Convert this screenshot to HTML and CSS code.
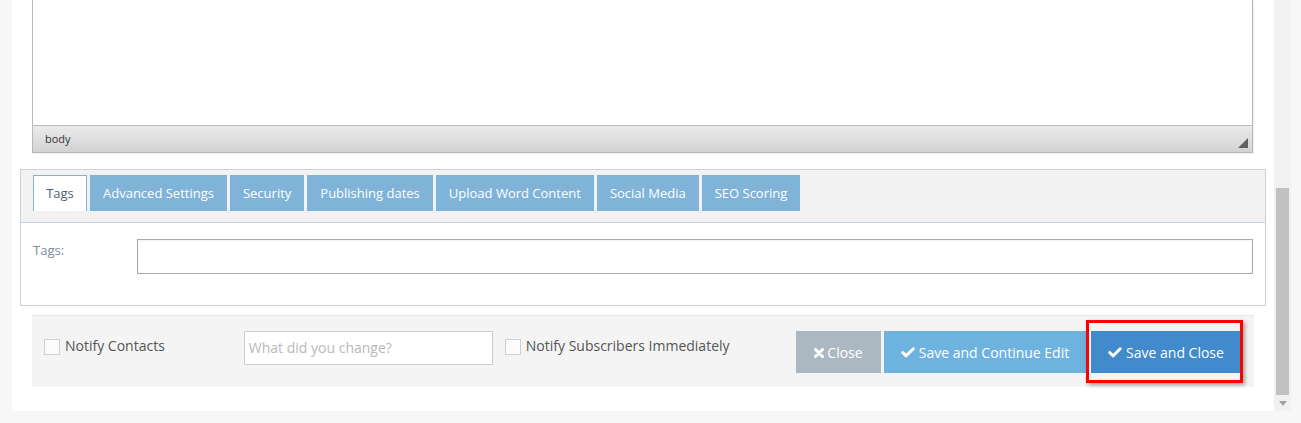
FILE: index.html
```html
<!DOCTYPE html>
<html>
<head>
<meta charset="utf-8">
<link rel="stylesheet" href="styles.css">
</head>
<body>
<div class="layout">
  <div class="main">
    <div class="editor">
      <div class="editor-area"></div>
      <div class="statusbar">
        <span class="path">body</span>
        <svg class="grip" width="10" height="10" viewBox="0 0 10 10"><polygon points="10,0 10,10 0,10" fill="#5f5f5f"/></svg>
      </div>
    </div>

    <div class="tabs-panel">
      <div class="tab-header">
        <div class="tab active">Tags</div>
        <div class="tab">Advanced Settings</div>
        <div class="tab">Security</div>
        <div class="tab">Publishing dates</div>
        <div class="tab">Upload Word Content</div>
        <div class="tab">Social Media</div>
        <div class="tab">SEO Scoring</div>
      </div>
      <div class="tab-body">
        <label class="field-label">Tags:</label>
        <div class="tags-input"></div>
      </div>
    </div>

    <div class="footer">
      <label class="check"><span class="box"></span>Notify Contacts</label>
      <div class="change-input">What did you change?</div>
      <label class="check check2"><span class="box"></span>Notify Subscribers Immediately</label>
      <div class="buttons">
        <div class="btn btn-close">
          <svg width="10" height="10" viewBox="0 0 10 10"><path d="M1.5 1.5 L8.5 8.5 M8.5 1.5 L1.5 8.5" stroke="#fff" stroke-width="3" stroke-linecap="round"/></svg>
          <span>Close</span>
        </div>
        <div class="btn btn-continue">
          <svg width="14" height="11" viewBox="0 0 14 11"><path d="M1.8 5.6 L5.2 8.8 L12.2 1.8" stroke="#fff" stroke-width="3" fill="none" stroke-linecap="round" stroke-linejoin="round"/></svg>
          <span>Save and Continue Edit</span>
        </div>
        <div class="btn btn-save">
          <svg width="14" height="11" viewBox="0 0 14 11"><path d="M1.8 5.6 L5.2 8.8 L12.2 1.8" stroke="#fff" stroke-width="3" fill="none" stroke-linecap="round" stroke-linejoin="round"/></svg>
          <span>Save and Close</span>
          <div class="highlight"></div>
        </div>
      </div>
    </div>
  </div>
  <div class="scrollbar">
    <div class="thumb"></div>
    <svg class="arrow" width="8" height="5" viewBox="0 0 8 5"><polygon points="0,0 8,0 4,5" fill="#a3a3a3"/></svg>
  </div>
</div>
</body>
</html>
```

FILE: styles.css
```css
html, body {
  margin: 0;
  padding: 0;
}
body {
  background: #f7f7f7;
  font-family: "Open Sans", "Noto Sans", "DejaVu Sans", sans-serif;
  width: 1301px;
  height: 423px;
  overflow: hidden;
}
.layout {
  display: flex;
  padding-left: 12px;
}
.main {
  width: 1262px;
  height: 411px;
  background: #fff;
  display: flex;
  flex-direction: column;
  align-items: flex-start;
}

/* editor */
.editor {
  margin-left: 20px;
  width: 1219px;
  border: 1px solid #b8b8b8;
  border-top: none;
  box-shadow: 1px 1px 1px rgba(0,0,0,0.06);
}
.editor-area {
  height: 125px;
  background: #fff;
}
.statusbar {
  height: 26px;
  border-top: 1px solid #bdbdbd;
  background: linear-gradient(#ebebeb, #d2d2d2);
  display: flex;
  align-items: center;
  justify-content: space-between;
  padding: 0 4px 0 12px;
}
.path {
  font-size: 11px;
  color: #333;
  line-height: 14px;
}
.grip {
  align-self: flex-end;
  margin-bottom: 4px;
}

/* tabs panel */
.tabs-panel {
  margin-top: 16px;
  margin-left: 8px;
  width: 1244px;
  border: 1px solid #c9d1db;
}
.tab-header {
  background: #f2f2f2;
  border-bottom: 1px solid #c6cfe1;
  display: flex;
  gap: 3px;
  padding: 5px 12px 11px;
}
.tab {
  height: 36px;
  line-height: 36px;
  padding: 0 13px;
  background: #7fb3d8;
  color: #fff;
  font-size: 13px;
  white-space: nowrap;
}
.tab.active {
  background: #fff;
  color: #4d6077;
  border: 1px solid #7fb3d8;
  border-bottom: none;
  height: 35px;
  line-height: 35px;
  padding: 0 12px;
  width: 28px;
  text-align: center;
}
.tab-body {
  height: 82px;
  display: flex;
  align-items: flex-start;
  padding: 16px 12px 0 12px;
  box-sizing: border-box;
}
.field-label {
  width: 104px;
  flex: none;
  font-size: 13px;
  color: #7d8b9c;
  line-height: 18px;
  margin-top: 2px;
}
.tags-input {
  flex: 1;
  height: 33px;
  border: 1px solid #a9a9a9;
  box-shadow: inset 0 1px 2px rgba(0,0,0,0.06);
  background: #fff;
}

/* footer */
.footer {
  position: relative;
  margin-top: 9px;
  margin-left: 20px;
  width: 1222px;
  height: 72px;
  background: #f4f4f4;
  border-top: 1px solid #e6e6e6;
  display: flex;
  align-items: flex-start;
  padding: 15px 13px 0 12px;
  box-sizing: border-box;
}
.check {
  display: flex;
  align-items: center;
  font-size: 14px;
  color: #555;
  line-height: 20px;
  margin-top: 5px;
  white-space: nowrap;
}
.box {
  width: 14px;
  height: 14px;
  border: 1px solid #cfcfcf;
  background: #fbfbfb;
  margin-right: 5px;
  margin-top: 2px;
}
.change-input {
  margin-left: 79px;
  height: 32px;
  border: 1px solid #cccccc;
  background: #fff;
  font-size: 14px;
  color: #b9b9b9;
  line-height: 32px;
  padding-left: 4px;
  width: 243px;
}
.check2 {
  margin-left: 12px;
}
.buttons {
  margin-left: auto;
  display: flex;
}
.btn {
  height: 42px;
  display: flex;
  align-items: center;
  justify-content: center;
  gap: 4px;
  color: #fff;
  font-size: 14px;
  white-space: nowrap;
  box-sizing: border-box;
}
.btn-close {
  width: 85px;
  background: #abb8c2;
  gap: 3px;
}
.btn-continue {
  width: 202px;
  margin-left: 3px;
  background: #6eb2e0;
}
.btn-save {
  width: 150px;
  margin-left: 5px;
  background: #418acb;
  position: relative;
}
.btn svg {
  margin-top: 1px;
}
.highlight {
  position: absolute;
  left: -5px;
  top: -11px;
  width: 151px;
  height: 57px;
  border: 3px solid #ff0000;
  box-shadow: 2px 2px 4px rgba(0,0,0,0.35);
}

/* scrollbar */
.scrollbar {
  width: 17px;
  height: 411px;
  background: #f1f1f1;
  display: flex;
  flex-direction: column;
  align-items: center;
}
.thumb {
  margin-top: 188px;
  width: 13px;
  height: 207px;
  background: #c1c1c1;
}
.arrow {
  margin-top: 6px;
}
```
